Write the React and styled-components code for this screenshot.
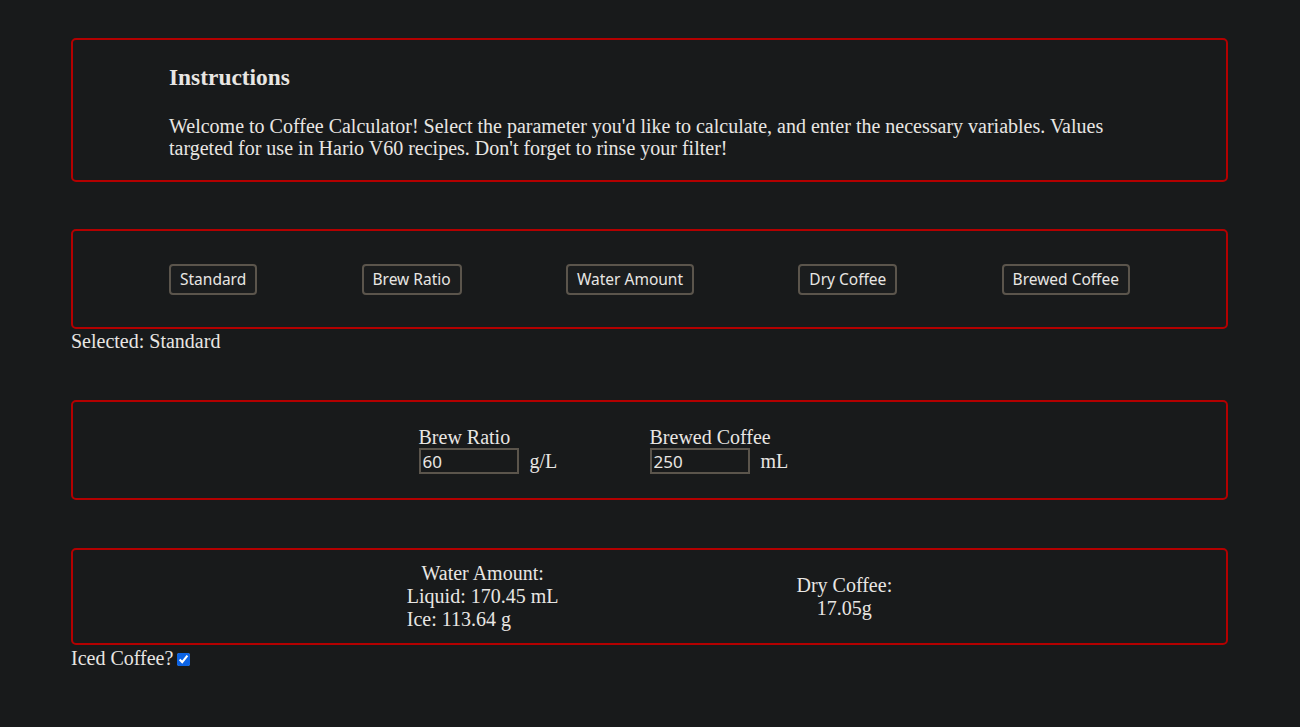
import React from 'react'
import styled, { createGlobalStyle } from 'styled-components'

const GlobalStyle = createGlobalStyle`
  html, body {
    background: #181a1b;
  }
  body {
    margin: 8px;
    color: #e8e6e3;
    font-family: "Liberation Serif", "Times New Roman", serif;
    font-size: 20px;
    line-height: 23px;
  }
`

const Page = styled.div`
  width: 1157px;
  margin: 30px 0 0 63px;
`

const Panel = styled.div`
  border: 2px solid #b30000;
  border-radius: 5px;
  padding: ${(p) => p.pad || '0'};
  margin-top: ${(p) => p.top || 0}px;
`

const Heading = styled.h3`
  margin: 0;
  font-size: 23.4px;
  line-height: 27px;
  font-weight: bold;
`

const Intro = styled.p`
  margin: 24px 0 0 0;
  line-height: 22px;
`

const ButtonRow = styled.div`
  display: flex;
  justify-content: space-between;
  align-items: center;
`

const ModeButton = styled.button`
  font-family: "Noto Sans", "Open Sans", sans-serif;
  font-size: 15.5px;
  line-height: 21px;
  color: #e8e6e3;
  background: #1b1d1e;
  border: 2px solid #5b554c;
  border-radius: 4px;
  padding: 3px 9px;
  cursor: pointer;
`

const Line = styled.div`
  line-height: 23px;
  margin: ${(p) => p.m || '0'};
`

const Fields = styled.div`
  display: flex;
  justify-content: center;
`

const Field = styled.div`
  width: 231px;
`

const FieldLabel = styled.div`
  line-height: 21px;
`

const FieldRow = styled.div`
  display: flex;
  align-items: center;
`

const NumberInput = styled.input`
  box-sizing: border-box;
  width: 100px;
  height: 26px;
  padding: 0 2px;
  font-family: "Noto Sans", "Open Sans", sans-serif;
  font-size: 17px;
  color: #e8e6e3;
  background: #181a1b;
  border: 2px solid #5b554c;
  outline: none;
`

const Unit = styled.span`
  margin-left: 11px;
`

const Results = styled.div`
  display: flex;
  justify-content: center;
  align-items: center;
  gap: 238px;
  line-height: 23px;
`

const ResultCol = styled.div`
  display: flex;
  flex-direction: column;
`

const ResultTitle = styled.div`
  text-align: center;
`

const CenterCol = styled(ResultCol)`
  align-items: center;
`

const Check = styled.input`
  width: 13px;
  height: 13px;
  margin: 0 0 0 4px;
  vertical-align: -1px;
  accent-color: #0b63e5;
`

const modes = ['Standard', 'Brew Ratio', 'Water Amount', 'Dry Coffee', 'Brewed Coffee']

const App = () => {
  const [selected, setSelected] = React.useState('Standard')
  const [ratio, setRatio] = React.useState('60')
  const [brewed, setBrewed] = React.useState('250')
  const [iced, setIced] = React.useState(true)

  return (
    <Page>
      <GlobalStyle />
      <Panel pad="24px 96px 21px 96px">
        <Heading>Instructions</Heading>
        <Intro>
          Welcome to Coffee Calculator! Select the parameter you'd like to calculate, and enter the necessary
          variables. Values targeted for use in Hario V60 recipes. Don't forget to rinse your filter!
        </Intro>
      </Panel>

      <Panel pad="33px 96px 32px 96px" top={47}>
        <ButtonRow>
          {modes.map((m) => (
            <ModeButton key={m} onClick={() => setSelected(m)}>{m}</ModeButton>
          ))}
        </ButtonRow>
      </Panel>
      <Line m="1px 0 0 0">Selected: {selected}</Line>

      <Panel pad="25px 0 24px 0" top={47}>
        <Fields>
          <Field>
            <FieldLabel>Brew Ratio</FieldLabel>
            <FieldRow>
              <NumberInput value={ratio} onChange={(e) => setRatio(e.target.value)} />
              <Unit>g/L</Unit>
            </FieldRow>
          </Field>
          <Field>
            <FieldLabel>Brewed Coffee</FieldLabel>
            <FieldRow>
              <NumberInput value={brewed} onChange={(e) => setBrewed(e.target.value)} />
              <Unit>mL</Unit>
            </FieldRow>
          </Field>
        </Fields>
      </Panel>

      <Panel pad="12px 0 12px 0" top={48}>
        <Results>
          <ResultCol>
            <ResultTitle>Water Amount:</ResultTitle>
            <div>Liquid: 170.45 mL</div>
            <div>Ice: 113.64 g</div>
          </ResultCol>
          <CenterCol>
            <div>Dry Coffee:</div>
            <div>17.05g</div>
          </CenterCol>
        </Results>
      </Panel>
      <Line m="2px 0 0 0">
        Iced Coffee?
        <Check type="checkbox" checked={iced} onChange={(e) => setIced(e.target.checked)} />
      </Line>
    </Page>
  )
}

export default App
